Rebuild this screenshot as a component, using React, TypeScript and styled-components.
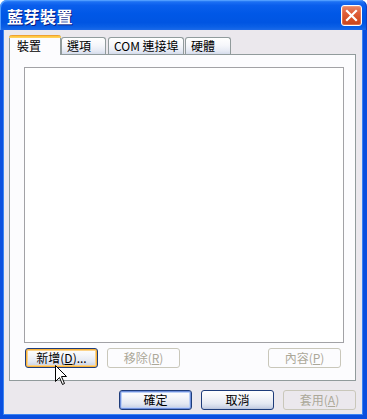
import React from "react";
import styled, { createGlobalStyle } from "styled-components";

const Global = createGlobalStyle`
  html, body { margin: 0; padding: 0; background: #ffffff; }
  body { font-family: "Noto Sans CJK TC", "Liberation Sans", sans-serif; font-size: 12px; }
  * { box-sizing: border-box; }
`;

const Window = styled.div`
  position: relative;
  width: 367px;
  height: 419px;
  display: flex;
  flex-direction: column;
`;

const TitleBar = styled.div`
  height: 30px;
  flex: none;
  display: flex;
  align-items: center;
  padding: 0 5px 0 7px;
  border-radius: 7px 7px 0 0;
  background: linear-gradient(
    180deg,
    #3d8ff8 0%,
    #1a6df3 8%,
    #0a5eec 18%,
    #0058e7 45%,
    #0055e2 75%,
    #0a5fe6 90%,
    #1c6ae8 100%
  );
  box-shadow: inset 1px 1px 0 #4f9cff, inset -1px 0 0 #0b3fc4;
`;

const TitleText = styled.div`
  flex: 1;
  color: #ffffff;
  font-size: 16px;
  font-weight: 700;
  line-height: 20px;
  letter-spacing: 0.5px;
  text-shadow: 1px 1px 0 #0a1b80;
  padding-top: 1px;
`;

const CloseButton = styled.div`
  width: 21px;
  height: 21px;
  border: 1px solid #ffffff;
  border-radius: 3px;
  background: linear-gradient(180deg, #e98a6c 0%, #e0603c 35%, #d44d22 75%, #c6451f 100%);
  display: flex;
  align-items: center;
  justify-content: center;
  box-shadow: inset 0 0 0 1px rgba(255, 180, 150, 0.35);
`;

const Frame = styled.div`
  flex: 1;
  display: flex;
  flex-direction: column;
  background: #ebe8ed;
  border-left: 3px solid #0a4fdf;
  border-right: 4px solid #0a4fdf;
  border-bottom: 4px solid #0a4fdf;
  box-shadow: inset 1px 0 0 #3a83f2, inset -1px -1px 0 #3a83f2;
  padding: 5px 7px 5px 6px;
`;

const TabRow = styled.div`
  height: 20px;
  display: flex;
  align-items: flex-end;
  margin-bottom: -1px;
  position: relative;
  z-index: 2;
`;

const Tab = styled.div<{ $w: number; $active?: boolean; $ml?: number }>`
  width: ${(p) => p.$w}px;
  margin-left: ${(p) => p.$ml ?? 0}px;
  height: ${(p) => (p.$active ? 20 : 17)}px;
  margin-bottom: ${(p) => (p.$active ? 0 : 1)}px;
  border: 1px solid #919b9c;
  border-bottom: none;
  border-radius: 3px 3px 0 0;
  padding-left: ${(p) => (p.$active ? 7 : 5)}px;
  padding-top: ${(p) => (p.$active ? 2 : 1)}px;
  white-space: nowrap;
  font-size: 12px;
  line-height: 14px;
  color: #000000;
  position: relative;
  background: ${(p) =>
    p.$active
      ? "#fcfcfe"
      : "linear-gradient(180deg, #ffffff 0%, #f6f7fb 45%, #e6eaf4 80%, #d5dcec 100%)"};
  ${(p) =>
    p.$active
      ? `
    border-top: none;
    &::before {
      content: "";
      position: absolute;
      left: -1px;
      right: -1px;
      top: 0;
      height: 3px;
      border-radius: 3px 3px 0 0;
      background: linear-gradient(180deg, #e68b2c 0%, #ffc73c 45%, #ffd36a 100%);
    }
    padding-top: 4px;
  `
      : ""}
`;

const Panel = styled.div`
  height: 327px;
  border: 1px solid #919b9c;
  background: #fcfcfe;
  padding: 12px 11px 12px 14px;
  display: flex;
  flex-direction: column;
  gap: 5px;
  position: relative;
  z-index: 1;
`;

const ListBox = styled.div`
  height: 276px;
  background: #ffffff;
  border: 1px solid #a2a2a6;
`;

const ButtonRow = styled.div<{ $pl?: number; $gap?: number }>`
  display: flex;
  align-items: center;
  gap: ${(p) => p.$gap ?? 9}px;
  padding-left: ${(p) => p.$pl ?? 0}px;
`;

const Spacer = styled.div`
  flex: 1;
`;

const Button = styled.div<{ $variant?: "default" | "focus" | "disabled" | "normal"; $mr?: number }>`
  width: 73px;
  height: 20px;
  margin-right: ${(p) => p.$mr ?? 0}px;
  border-radius: 3px;
  display: flex;
  align-items: center;
  justify-content: center;
  font-size: 12px;
  line-height: 14px;
  white-space: nowrap;
  color: ${(p) => (p.$variant === "disabled" ? "#aca899" : "#000000")};
  border: 1px solid ${(p) => (p.$variant === "disabled" ? "#c9c7ba" : "#1e3c7a")};
  background: ${(p) =>
    p.$variant === "disabled"
      ? "transparent"
      : "linear-gradient(180deg, #ffffff 0%, #f4f5f9 35%, #e3e8f2 70%, #cdd5e7 90%, #b6c1da 100%)"};
  box-shadow: ${(p) =>
    p.$variant === "focus"
      ? "inset 0 0 0 1px #f8b23a, inset 0 0 0 2px #fbd38a"
      : p.$variant === "default"
      ? "inset 0 0 0 1px #6f8fdc, inset 0 0 0 2px #bcd0f6"
      : "none"};
  u {
    text-decoration: underline;
    text-underline-offset: 1px;
  }
`;

const BottomRow = styled(ButtonRow)`
  margin-top: 9px;
  justify-content: flex-end;
`;

const Cursor = styled.svg`
  position: absolute;
  left: 55px;
  top: 365px;
  z-index: 10;
`;

export default function App() {
  return (
    <>
      <Global />
      <Window>
        <TitleBar>
          <TitleText>藍芽裝置</TitleText>
          <CloseButton>
            <svg width="13" height="13" viewBox="0 0 13 13">
              <path d="M2 2 L11 11 M11 2 L2 11" stroke="#ffffff" strokeWidth="2.2" strokeLinecap="square" />
            </svg>
          </CloseButton>
        </TitleBar>
        <Frame>
          <TabRow>
            <Tab $w={52} $active>
              裝置
            </Tab>
            <Tab $w={45} $ml={0}>
              選項
            </Tab>
            <Tab $w={76} $ml={2}>
              COM 連接埠
            </Tab>
            <Tab $w={46} $ml={1}>
              硬體
            </Tab>
          </TabRow>
          <Panel>
            <ListBox />
            <ButtonRow $pl={1}>
              <Button $variant="focus">
                新增(<u>D</u>)...
              </Button>
              <Button $variant="disabled">
                移除(<u>R</u>)
              </Button>
              <Spacer />
              <Button $variant="disabled" $mr={3}>
                內容(<u>P</u>)
              </Button>
            </ButtonRow>
          </Panel>
          <BottomRow>
            <Button $variant="default">確定</Button>
            <Button $variant="normal">取消</Button>
            <Button $variant="disabled">
              套用(<u>A</u>)
            </Button>
          </BottomRow>
        </Frame>
        <Cursor width="12" height="20" viewBox="0 0 12 20">
          <path
            d="M0.5 0.5 L0.5 16.5 L4.5 12.5 L7.5 19.5 L9.5 18.5 L6.5 11.5 L11.5 11.5 Z"
            fill="#ffffff"
            stroke="#000000"
            strokeWidth="1"
            strokeLinejoin="miter"
          />
        </Cursor>
      </Window>
    </>
  );
}
